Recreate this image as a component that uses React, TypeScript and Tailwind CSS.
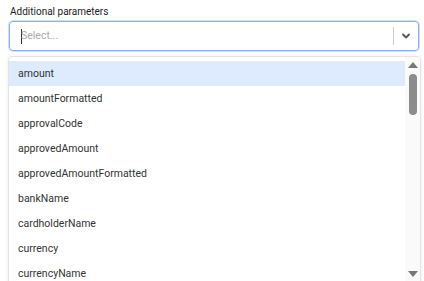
import React from 'react';

const options = [
  'amount',
  'amountFormatted',
  'approvalCode',
  'approvedAmount',
  'approvedAmountFormatted',
  'bankName',
  'cardholderName',
  'currency',
  'currencyName',
];

export default function App() {
  return (
    <div className="w-[424px] h-[281px] bg-white overflow-hidden" style={{ fontFamily: 'Roboto, "Liberation Sans", sans-serif' }}>
      <div className="pl-[9px] pr-[5px] pt-[5px]">
        <label className="block text-[10px] leading-[14px] text-[#222] pl-[1px]">Additional parameters</label>
        <div className="mt-[2px] h-[30px] flex items-center rounded-[4px] border border-[#8ab0f2] shadow-[0_0_0_1px_#cfdefb]">
          <div className="flex-1 flex items-center pl-[11px] text-[10.5px] text-[#aaa]">
            <span className="w-px h-[15px] bg-[#333] mr-[-1px]" />
            <span>Select...</span>
          </div>
          <span className="w-px h-[18px] bg-[#ccc]" />
          <div className="w-[24px] flex items-center justify-center text-[#555]">
            <svg width="10" height="10" viewBox="0 0 10 10" fill="none" stroke="currentColor" strokeWidth="1.8" strokeLinecap="round" strokeLinejoin="round">
              <path d="M2 3.5 L5 6.5 L8 3.5" />
            </svg>
          </div>
        </div>
      </div>
      <div className="ml-[8px] mr-[3px] mt-[5px] h-[230px] flex rounded-[4px] border border-[#e4e4e4] shadow-[0_1px_4px_rgba(0,0,0,0.08)] bg-white overflow-hidden">
        <div className="flex-1 pt-[4px] overflow-hidden">
          {options.map((o, i) => (
            <div
              key={o}
              className={`h-[25px] flex items-center pl-[9px] pt-px text-[10.5px] text-[#333] ${i === 0 ? 'bg-[#deebff]' : ''}`}
            >
              {o}
            </div>
          ))}
        </div>
        <div className="w-[15px] flex flex-col items-center bg-[#fafafa] pt-[5px] pb-[8px]">
          <span className="w-0 h-0 border-l-[5px] border-r-[5px] border-b-[6px] border-l-transparent border-r-transparent border-b-[#777]" />
          <span className="mt-[6px] w-[8px] h-[41px] rounded-[4px] bg-[#8c8c8c]" />
          <span className="flex-1" />
          <span className="w-0 h-0 border-l-[5px] border-r-[5px] border-t-[6px] border-l-transparent border-r-transparent border-t-[#777]" />
        </div>
      </div>
    </div>
  );
}
